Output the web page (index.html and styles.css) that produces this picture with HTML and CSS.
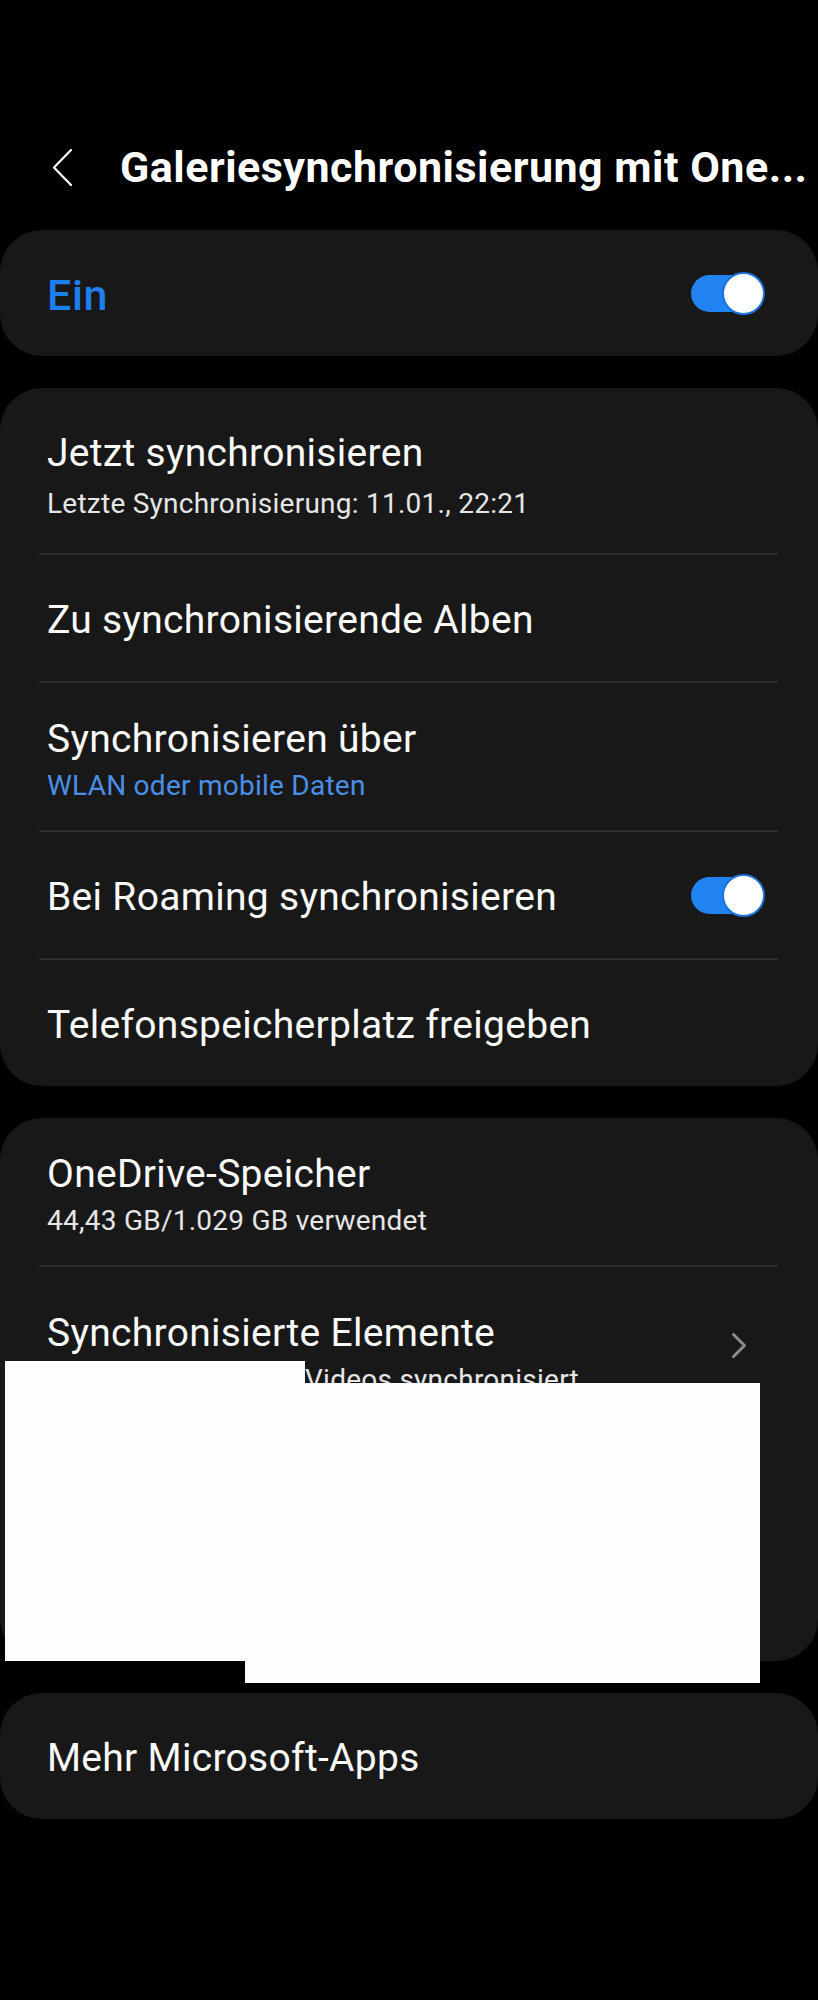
FILE: index.html
```html
<!DOCTYPE html>
<html lang="de">
<head>
<meta charset="utf-8">
<title>Galeriesynchronisierung mit OneDrive</title>
<link rel="stylesheet" href="styles.css">
</head>
<body>
<div class="screen">
  <header class="appbar">
    <svg class="back" width="20" height="37" viewBox="0 0 20 37" aria-hidden="true">
      <polyline points="19,1 2,18.5 19,36" fill="none" stroke="#ffffff" stroke-width="2.2" stroke-linecap="round" stroke-linejoin="round"/>
    </svg>
    <h1 class="title">Galeriesynchronisierung mit One...</h1>
  </header>

  <main class="cards">
    <section class="card">
      <div class="row">
        <span class="master">Ein</span>
        <span class="switch"><span class="knob"></span></span>
      </div>
    </section>

    <section class="card">
      <div class="row two first">
        <div class="text">
          <div class="label">Jetzt synchronisieren</div>
          <div class="sub">Letzte Synchronisierung: 11.01., 22:21</div>
        </div>
      </div>
      <div class="divider"></div>
      <div class="row">
        <div class="label">Zu synchronisierende Alben</div>
      </div>
      <div class="divider"></div>
      <div class="row two">
        <div class="text">
          <div class="label">Synchronisieren über</div>
          <div class="sub link">WLAN oder mobile Daten</div>
        </div>
      </div>
      <div class="divider"></div>
      <div class="row">
        <div class="label">Bei Roaming synchronisieren</div>
        <span class="switch"><span class="knob"></span></span>
      </div>
      <div class="divider"></div>
      <div class="row">
        <div class="label">Telefonspeicherplatz freigeben</div>
      </div>
    </section>

    <section class="card tall">
      <div class="row two">
        <div class="text">
          <div class="label">OneDrive-Speicher</div>
          <div class="sub">44,43 GB/1.029 GB verwendet</div>
        </div>
      </div>
      <div class="divider"></div>
      <div class="row two nav">
        <div class="text">
          <div class="label">Synchronisierte Elemente</div>
          <div class="sub"><span class="shifted">Videos synchronisiert</span></div>
        </div>
        <svg class="chev" width="16" height="27" viewBox="0 0 16 27" aria-hidden="true">
          <polyline points="2.5,2.5 13.5,13.5 2.5,24.5" fill="none" stroke="#8c8c8c" stroke-width="3" stroke-linecap="round" stroke-linejoin="round"/>
        </svg>
      </div>
    </section>

    <section class="card">
      <div class="row">
        <div class="label">Mehr Microsoft-Apps</div>
      </div>
    </section>
  </main>

  <div class="redact redact-a"></div>
  <div class="redact redact-b"></div>
</div>
</body>
</html>
```

FILE: styles.css
```css
html, body {
  margin: 0;
  padding: 0;
  background: #000000;
}

body {
  font-family: "Roboto", "Noto Sans", sans-serif;
  color: #fafafa;
}

.screen {
  position: relative;
  width: 818px;
  min-height: 2000px;
  padding-top: 104px;
  box-sizing: border-box;
  background: #000000;
}

.appbar {
  display: flex;
  align-items: center;
  height: 126px;
  padding-left: 52px;
  gap: 48px;
}

.back {
  display: block;
  flex-shrink: 0;
}

.title {
  margin: 0;
  font-size: 43px;
  line-height: 52px;
  font-weight: 700;
  letter-spacing: 0.5px;
  color: #ffffff;
  white-space: nowrap;
}

.cards {
  display: flex;
  flex-direction: column;
  gap: 32px;
}

.card {
  background: #181818;
  border-radius: 42px;
  overflow: hidden;
}

.card.tall {
  min-height: 543px;
}

.row {
  display: flex;
  align-items: center;
  justify-content: space-between;
  padding: 41px 56px 37px 47px;
}

.row.two {
  padding-top: 32px;
  padding-bottom: 25px;
}

.row.first {
  padding-top: 41px;
  padding-bottom: 30px;
}

.row.first .sub {
  margin-top: 8px;
}

.row.nav {
  padding-top: 42px;
  padding-bottom: 24px;
  padding-right: 71px;
}

.label {
  font-size: 39px;
  line-height: 48px;
  letter-spacing: 0.3px;
  color: #fafafa;
  white-space: nowrap;
}

.sub {
  margin-top: 4px;
  font-size: 28px;
  line-height: 38px;
  letter-spacing: 0.25px;
  color: #e6e6e6;
  white-space: nowrap;
}

.sub.link {
  color: #4a8fe8;
}

.shifted {
  margin-left: 258px;
}

.master {
  font-size: 43px;
  line-height: 48px;
  font-weight: 500;
  letter-spacing: 0.6px;
  color: #1f7fee;
}

.switch {
  display: flex;
  align-items: center;
  justify-content: flex-end;
  width: 71px;
  height: 37px;
  margin-bottom: 4px;
  border-radius: 19px;
  background: #2183f2;
  flex-shrink: 0;
}

.knob {
  width: 39px;
  height: 39px;
  margin: -3px -3px -3px 0;
  border-radius: 50%;
  background: #ffffff;
  border: 2px solid #1a73dc;
  flex-shrink: 0;
}

.chev {
  display: block;
  flex-shrink: 0;
  margin-bottom: 18px;
}

.divider {
  height: 2px;
  margin: 0 40px 0 39px;
  background: #2e2e2e;
}

.redact {
  position: absolute;
  background: #fdfdfd;
}

.redact-a {
  left: 5px;
  top: 1361px;
  width: 300px;
  height: 300px;
}

.redact-b {
  left: 245px;
  top: 1383px;
  width: 515px;
  height: 300px;
}
```
